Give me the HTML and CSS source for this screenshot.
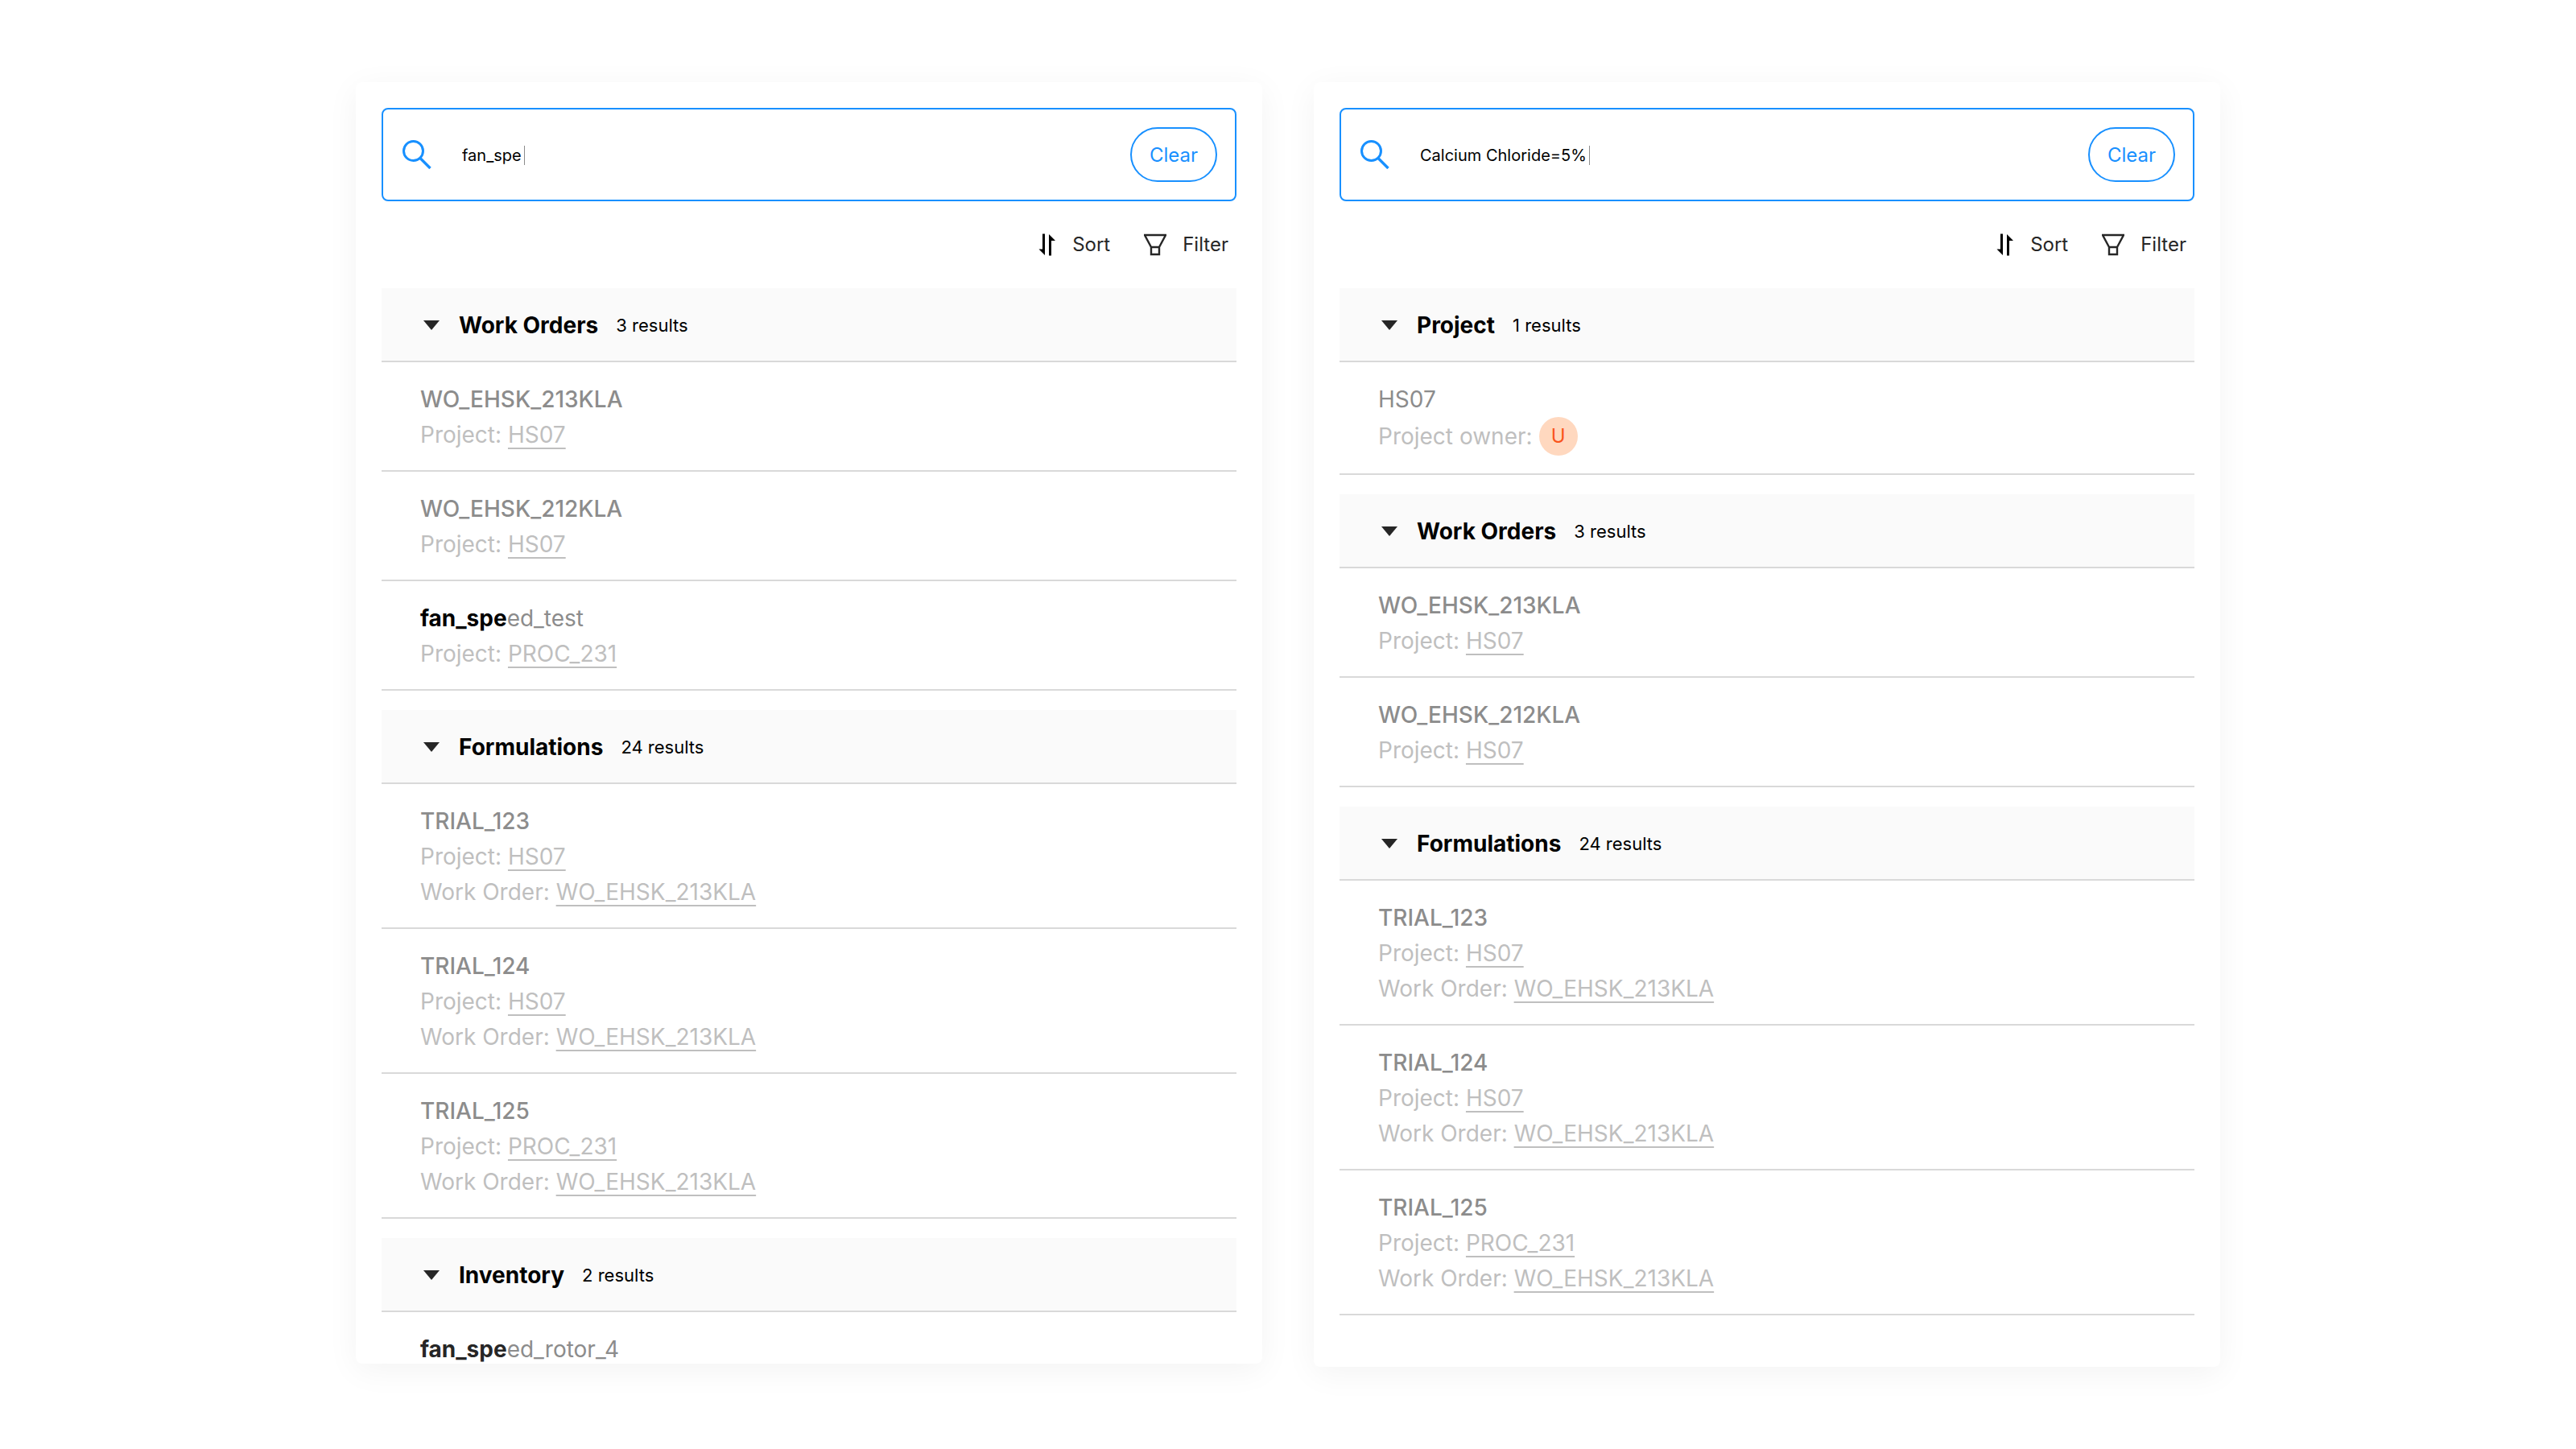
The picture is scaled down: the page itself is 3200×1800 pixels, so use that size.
FILE: index.html
```html
<!DOCTYPE html>
<html lang="en">
<head>
<meta charset="utf-8">
<meta name="viewport" content="width=device-width, initial-scale=1">
<title>Search results</title>
<link rel="stylesheet" href="styles.css">
</head>
<body>
<svg class="sprite" aria-hidden="true">
  <symbol id="icon-search" viewBox="0 0 36 36">
    <circle cx="13.5" cy="13.500" r="12" fill="none" stroke="currentColor" stroke-width="3"/>
    <path d="M21.500 22L34.500 35" fill="none" stroke="currentColor" stroke-width="3.4"/>
  </symbol>
  <symbol id="icon-sort" viewBox="0 0 22 28">
    <path d="M8 0.500V27L0.500 19.500H5V0.500Z" fill="currentColor"/>
    <path d="M13 27.500V1L21 9H16V27.500Z" fill="currentColor"/>
  </symbol>
  <symbol id="icon-filter" viewBox="0 0 28 28">
    <path d="M1 2H27L19 17V26H9V17Z M9 17H19" fill="none" stroke="currentColor" stroke-width="2.400"/>
  </symbol>
  <symbol id="icon-caret" viewBox="0 0 20 12">
    <path d="M0 0H20L10 12Z" fill="currentColor"/>
  </symbol>
</svg>
<main class="board">
  <section class="panel panel-clipped">
    <form class="search">
      <svg class="search-icon" aria-hidden="true"><use href="#icon-search"/></svg>
      <span class="search-field"><input class="search-input" type="text" aria-label="Search" value="fan_spe"><span class="cursor"></span></span>
      <button class="clear" type="button">Clear</button>
    </form>
    <div class="tools">
      <button class="tool" type="button"><svg class="sort-icon" aria-hidden="true"><use href="#icon-sort"/></svg>Sort</button>
      <button class="tool" type="button"><svg class="filter-icon" aria-hidden="true"><use href="#icon-filter"/></svg>Filter</button>
    </div>
    <div class="groups">
      <section class="group">
        <header class="group-head"><svg class="caret" aria-hidden="true"><use href="#icon-caret"/></svg><h2 class="group-title">Work Orders</h2><span class="count">3 results</span></header>
        <ul class="items">
          <li class="item"><div class="name">WO_EHSK_213KLA</div><div class="meta">Project: <a class="link" href="#">HS07</a></div></li>
          <li class="item"><div class="name">WO_EHSK_212KLA</div><div class="meta">Project: <a class="link" href="#">HS07</a></div></li>
          <li class="item"><div class="name name-regular"><b class="match">fan_spe</b>ed_test</div><div class="meta">Project: <a class="link" href="#">PROC_231</a></div></li>
        </ul>
      </section>
      <section class="group">
        <header class="group-head"><svg class="caret" aria-hidden="true"><use href="#icon-caret"/></svg><h2 class="group-title">Formulations</h2><span class="count">24 results</span></header>
        <ul class="items">
          <li class="item"><div class="name">TRIAL_123</div><div class="meta">Project: <a class="link" href="#">HS07</a></div><div class="meta">Work Order: <a class="link" href="#">WO_EHSK_213KLA</a></div></li>
          <li class="item"><div class="name">TRIAL_124</div><div class="meta">Project: <a class="link" href="#">HS07</a></div><div class="meta">Work Order: <a class="link" href="#">WO_EHSK_213KLA</a></div></li>
          <li class="item"><div class="name">TRIAL_125</div><div class="meta">Project: <a class="link" href="#">PROC_231</a></div><div class="meta">Work Order: <a class="link" href="#">WO_EHSK_213KLA</a></div></li>
        </ul>
      </section>
      <section class="group">
        <header class="group-head"><svg class="caret" aria-hidden="true"><use href="#icon-caret"/></svg><h2 class="group-title">Inventory</h2><span class="count">2 results</span></header>
        <ul class="items">
          <li class="item"><div class="name name-regular"><b class="match match-soft">fan_spe</b>ed_rotor_4</div></li>
        </ul>
      </section>
    </div>
  </section>

  <section class="panel">
    <form class="search">
      <svg class="search-icon" aria-hidden="true"><use href="#icon-search"/></svg>
      <span class="search-field"><input class="search-input" type="text" aria-label="Search" value="Calcium Chloride=5%"><span class="cursor"></span></span>
      <button class="clear" type="button">Clear</button>
    </form>
    <div class="tools">
      <button class="tool" type="button"><svg class="sort-icon" aria-hidden="true"><use href="#icon-sort"/></svg>Sort</button>
      <button class="tool" type="button"><svg class="filter-icon" aria-hidden="true"><use href="#icon-filter"/></svg>Filter</button>
    </div>
    <div class="groups">
      <section class="group">
        <header class="group-head"><svg class="caret" aria-hidden="true"><use href="#icon-caret"/></svg><h2 class="group-title">Project</h2><span class="count">1 results</span></header>
        <ul class="items">
          <li class="item"><div class="name name-regular">HS07</div><div class="meta owner">Project owner: <span class="avatar">U</span></div></li>
        </ul>
      </section>
      <section class="group">
        <header class="group-head"><svg class="caret" aria-hidden="true"><use href="#icon-caret"/></svg><h2 class="group-title">Work Orders</h2><span class="count">3 results</span></header>
        <ul class="items">
          <li class="item"><div class="name">WO_EHSK_213KLA</div><div class="meta">Project: <a class="link" href="#">HS07</a></div></li>
          <li class="item"><div class="name">WO_EHSK_212KLA</div><div class="meta">Project: <a class="link" href="#">HS07</a></div></li>
        </ul>
      </section>
      <section class="group">
        <header class="group-head"><svg class="caret" aria-hidden="true"><use href="#icon-caret"/></svg><h2 class="group-title">Formulations</h2><span class="count">24 results</span></header>
        <ul class="items">
          <li class="item"><div class="name">TRIAL_123</div><div class="meta">Project: <a class="link" href="#">HS07</a></div><div class="meta">Work Order: <a class="link" href="#">WO_EHSK_213KLA</a></div></li>
          <li class="item"><div class="name">TRIAL_124</div><div class="meta">Project: <a class="link" href="#">HS07</a></div><div class="meta">Work Order: <a class="link" href="#">WO_EHSK_213KLA</a></div></li>
          <li class="item"><div class="name">TRIAL_125</div><div class="meta">Project: <a class="link" href="#">PROC_231</a></div><div class="meta">Work Order: <a class="link" href="#">WO_EHSK_213KLA</a></div></li>
        </ul>
      </section>
    </div>
  </section>
</main>
</body>
</html>
```
FILE: styles.css
```css
* {
  box-sizing: border-box;
}

body {
  margin: 0;
  background: #fff;
  color: #000;
  font-family: Inter, "Liberation Sans", sans-serif;
  font-size: 28px;
  line-height: 44px;
}

button,
input {
  font-family: inherit;
}

.sprite {
  position: absolute;
  width: 0;
  height: 0;
}

.board {
  display: grid;
  grid-template-columns: minmax(0, 1fr) minmax(0, 1fr);
  align-items: start;
  gap: 64px;
  max-width: 2316px;
  margin: 0 auto;
  padding: 102px 0;
}

.panel {
  padding: 32px 32px 64px;
  border-radius: 8px;
  background: #fff;
  box-shadow: 0 8px 40px rgba(0, 0, 0, 0.05);
}

.panel-clipped {
  max-height: calc(100vh - 208px);
  overflow: hidden;
}

.search {
  display: flex;
  align-items: center;
  height: 116px;
  padding: 0 22px 0 24px;
  border: 2px solid #1890ff;
  border-radius: 8px;
}

.search-icon {
  width: 36px;
  height: 36px;
  color: #1890ff;
}

.search-field {
  display: flex;
  flex: 1;
  align-items: center;
  margin-left: 38px;
  padding-top: 2px;
}

.search-input {
  field-sizing: content;
  padding: 0;
  border: 0;
  outline: 0;
  background: none;
  color: #000;
  font-size: 20px;
  line-height: 32px;
}

.cursor {
  width: 1px;
  height: 24px;
  margin-left: 3px;
  background: #8c8c8c;
}

.clear {
  height: 68px;
  padding: 0 22px;
  border: 2px solid #1890ff;
  border-radius: 34px;
  background: #fff;
  color: #1890ff;
  font-size: 24px;
}

.tools {
  display: flex;
  justify-content: flex-end;
  gap: 42px;
  padding: 32px 10px;
}

.tool {
  display: flex;
  align-items: center;
  padding: 0;
  border: 0;
  background: none;
  color: #262626;
  font-size: 24px;
  line-height: 44px;
}

.sort-icon,
.filter-icon {
  height: 28px;
  margin-right: 20px;
}

.sort-icon {
  width: 22px;
  color: #000;
}

.filter-icon {
  width: 28px;
}

.groups {
  display: grid;
  gap: 24px;
}

.group-head {
  display: flex;
  align-items: center;
  height: 92px;
  padding: 2px 52px 0;
  border-bottom: 2px solid #d9d9d9;
  background: #fafafa;
}

.caret {
  width: 20px;
  height: 12px;
  margin-right: 24px;
  color: #262626;
}

.group-title {
  margin: 0 22px 0 0;
  font-size: 28px;
  font-weight: 700;
}

.count {
  font-size: 22px;
}

.items {
  margin: 0;
  padding: 0;
  list-style: none;
}

.item {
  padding: 24px 48px 22px;
  border-bottom: 2px solid #d9d9d9;
}

.name {
  color: #8c8c8c;
  font-weight: 500;
}

.name-regular {
  font-weight: 400;
}

.match {
  color: #000;
  font-weight: 700;
}

.match-soft {
  color: #262626;
}

.meta {
  color: #bfbfbf;
}

.link {
  color: inherit;
  text-decoration: underline 2px;
  text-underline-offset: 6px;
  text-decoration-skip-ink: none;
}

.owner {
  display: flex;
  align-items: center;
  gap: 8px;
}

.avatar {
  width: 48px;
  height: 48px;
  border-radius: 50%;
  background: #ffd8bf;
  color: #fa541c;
  font-size: 24px;
  line-height: 48px;
  text-align: center;
}
```
